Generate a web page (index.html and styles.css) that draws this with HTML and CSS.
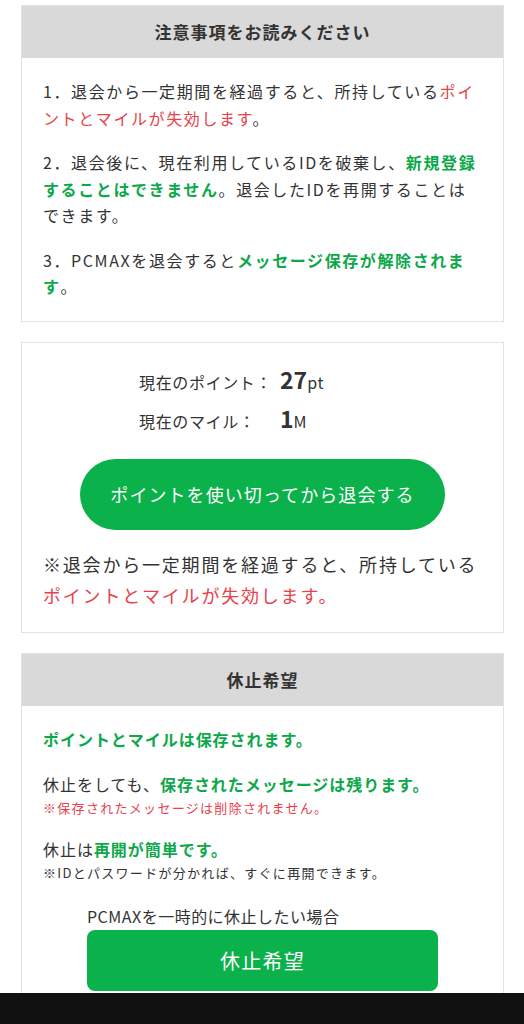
FILE: index.html
```html
<!DOCTYPE html>
<html lang="ja">
<head>
  <meta charset="UTF-8">
  <title>退会手続き</title>
  <link rel="stylesheet" href="styles.css">
</head>
<body>

  <div class="box">
    <div class="box-head">注意事項をお読みください</div>
    <div class="box-body notice">
      <p>1．退会から一定期間を経過すると、所持している<span class="red">ポイントとマイルが失効します</span>。</p>
      <p>2．退会後に、現在利用しているIDを破棄し、<b class="green">新規登録することはできません</b>。退会したIDを再開することはできます。</p>
      <p>3．PCMAXを退会すると<b class="green">メッセージ保存が解除されます</b>。</p>
    </div>
  </div>

  <div class="box">
    <div class="box-body points">
      <div class="balance">
        <span class="label">現在のポイント：</span>
        <span class="value"><b>27</b>pt</span>
        <span class="label">現在のマイル：</span>
        <span class="value"><b>1</b>M</span>
      </div>
      <a class="btn-pill" href="#">ポイントを使い切ってから退会する</a>
      <p class="warn">※退会から一定期間を経過すると、所持している<span class="red">ポイントとマイルが失効します。</span></p>
    </div>
  </div>

  <div class="box">
    <div class="box-head">休止希望</div>
    <div class="box-body pause">
      <p class="lead"><b class="green">ポイントとマイルは保存されます。</b></p>
      <p>休止をしても、<b class="green">保存されたメッセージは残ります。</b></p>
      <p class="small red">※保存されたメッセージは削除されません。</p>
      <p class="gap">休止は<b class="green">再開が簡単です。</b></p>
      <p class="small">※IDとパスワードが分かれば、すぐに再開できます。</p>
      <div class="pause-action">
        <div class="pause-label">PCMAXを一時的に休止したい場合</div>
        <a class="btn-rect" href="#">休止希望</a>
      </div>
    </div>
  </div>

  <div class="navbar"></div>

</body>
</html>
```

FILE: styles.css
```css
body {
  margin: 0;
  padding: 5px 20px 40px 21px;
  background: #fff;
  color: #333;
  font-family: "Noto Sans CJK JP", "Noto Sans", sans-serif;
  font-size: 16px;
}
p {
  margin: 0;
}
.red {
  color: #e8414a;
}
.green {
  color: #0ca84a;
  font-weight: bold;
}
.box {
  border: 1px solid #e2e2e2;
  margin-bottom: 20px;
}
.box-head {
  background: #d9d9d9;
  height: 52px;
  line-height: 52px;
  text-align: center;
  font-weight: bold;
  font-size: 17px;
  letter-spacing: 0.06em;
  color: #333;
}
.box-body {
  background: #fff;
  padding: 20px 21px 21px 21px;
}
.notice p {
  line-height: 26.5px;
  letter-spacing: 0.1em;
  margin-bottom: 18px;
}
.notice p:last-child {
  margin-bottom: 0;
}

/* points */
.balance {
  display: grid;
  grid-template-columns: 141px auto;
  grid-auto-rows: 39px;
  align-items: center;
  padding-left: 96px;
  letter-spacing: 0.04em;
}
.balance .label,
.balance .value {
  line-height: 39px;
  height: 39px;
}
.balance .value b {
  font-size: 23px;
  line-height: 1;
  letter-spacing: 0;
}
.btn-pill {
  display: block;
  width: 365px;
  height: 71px;
  line-height: 71px;
  margin: 18px auto 0;
  border-radius: 36px;
  background: #0bb14a;
  color: #fff;
  text-align: center;
  text-decoration: none;
  font-size: 18px;
  letter-spacing: 0.06em;
}
.warn {
  margin-top: 19px;
  font-size: 18px;
  line-height: 31px;
  letter-spacing: 0.1em;
}

/* pause */
.pause p {
  line-height: 26px;
  letter-spacing: 0.06em;
}
.pause .lead {
  margin-bottom: 19px;
}
.pause .small {
  font-size: 13px;
  line-height: 21px;
  letter-spacing: 0.1em;
}
.pause .gap {
  margin-top: 18px;
}
.pause-action {
  width: 351px;
  margin: 21px auto 0;
}
.pause-label {
  line-height: 24px;
  letter-spacing: 0.03em;
  margin-bottom: 2px;
}
.btn-rect {
  display: block;
  height: 61px;
  line-height: 61px;
  border-radius: 8px;
  background: #0bb14a;
  color: #fff;
  text-align: center;
  text-decoration: none;
  font-size: 20px;
  letter-spacing: 0.06em;
}

.navbar {
  position: fixed;
  left: 0;
  right: 0;
  bottom: 0;
  height: 31px;
  background: #111;
}
```
